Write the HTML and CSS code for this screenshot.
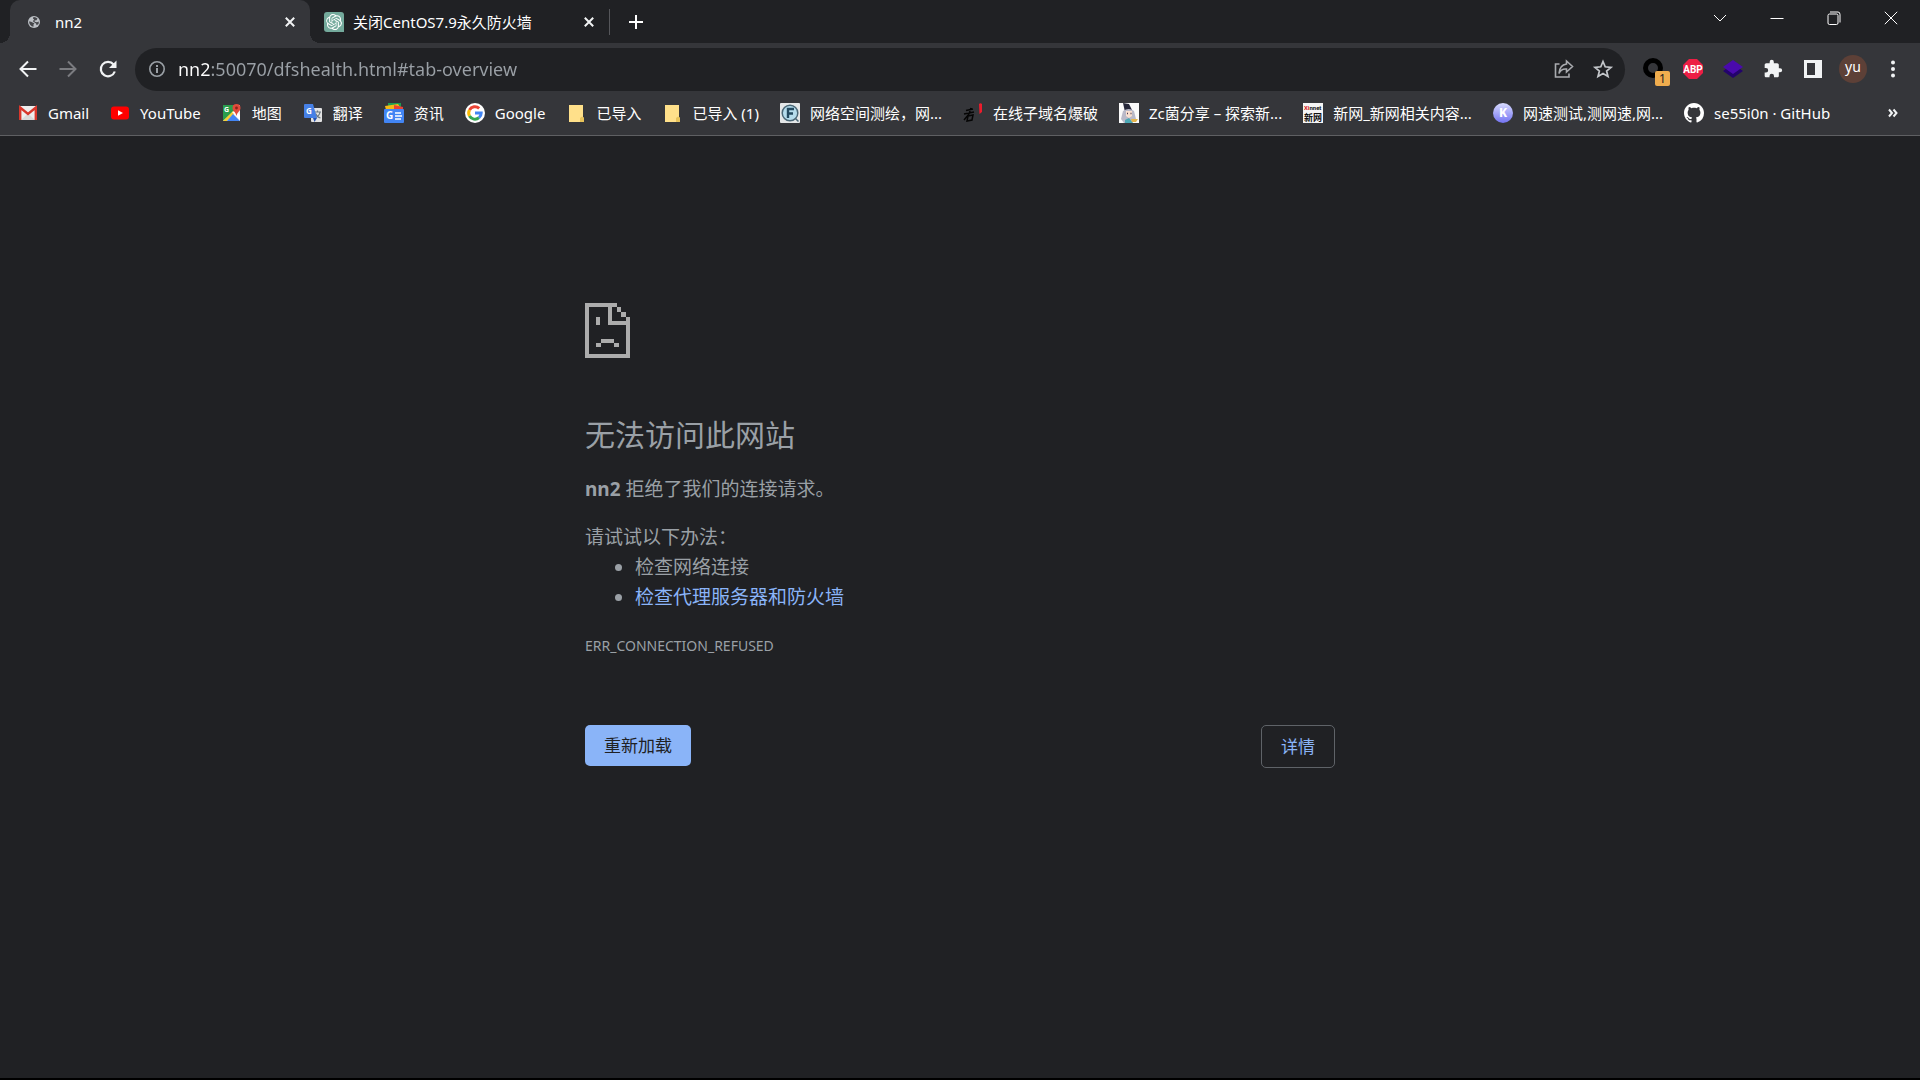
FILE: index.html
```html
<!DOCTYPE html>
<html lang="zh-CN">
<head>
<meta charset="utf-8">
<meta name="viewport" content="width=device-width, initial-scale=1">
<title>nn2</title>
<link rel="stylesheet" href="styles.css">
</head>
<body>
<header class="chrome">
  <div class="tabstrip">
    <div class="tabs">
      <div class="tab tab-active">
        <svg class="tab-globe" viewBox="0 0 12 12" aria-hidden="true"><circle cx="6" cy="6" r="6" fill="#bdc1c6"/><path d="M1 5.500Q2.500 5 4.500 6.500L6.500 7.200 5.500 8.500 5.500 10.800Q1.500 10 1 5.500ZM5.500 1Q8 .8 9.500 2.600L8.500 4.200 6.500 4.500 6.800 5.800 9 6.300 10.800 5.500 10.600 8 8.600 9.200 8 7.500 6.500 6.600 4.800 5.200 6.200 3.400 4.900 2.600Z" fill="#45464a"/></svg>
        <span class="tab-title">nn2</span>
        <button class="tab-close" aria-label="关闭标签页"><svg viewBox="0 0 10 10" aria-hidden="true"><path d="M.8.8 9.200 9.200M9.200.8.8 9.200"/></svg></button>
      </div>
      <div class="tab tab-second">
        <svg class="tab-icon" viewBox="0 0 20 20" aria-hidden="true"><path d="M3 0H17Q20 0 20 3V20H3Q0 20 0 17V3Q0 0 3 0Z" fill="#74aa9c"/><path transform="translate(2 2) scale(.667)" fill="#fff" d="M22.2819 9.8211a5.9847 5.9847 0 0 0-.5157-4.9108 6.0462 6.0462 0 0 0-6.5098-2.9A6.0651 6.0651 0 0 0 4.9807 4.1818a5.9847 5.9847 0 0 0-3.9977 2.9 6.0462 6.0462 0 0 0 .7427 7.0966 5.98 5.98 0 0 0 .511 4.9107 6.051 6.051 0 0 0 6.5146 2.9001A5.9847 5.9847 0 0 0 13.2599 24a6.0557 6.0557 0 0 0 5.7718-4.2058 5.9894 5.9894 0 0 0 3.9977-2.9001 6.0557 6.0557 0 0 0-.7475-7.0729zm-9.022 12.6081a4.4755 4.4755 0 0 1-2.8764-1.0408l.1419-.0804 4.7783-2.7582a.7948.7948 0 0 0 .3927-.6813v-6.7369l2.02 1.1686a.071.071 0 0 1 .038.052v5.5826a4.504 4.504 0 0 1-4.4945 4.4944zm-9.6607-4.1254a4.4708 4.4708 0 0 1-.5346-3.0137l.142.0852 4.783 2.7582a.7712.7712 0 0 0 .7806 0l5.8428-3.3685v2.3324a.0804.0804 0 0 1-.0332.0615L9.74 19.9502a4.4992 4.4992 0 0 1-6.1408-1.6464zM2.3408 7.8956a4.485 4.485 0 0 1 2.3655-1.9728V11.6a.7664.7664 0 0 0 .3879.6765l5.8144 3.3543-2.0201 1.1685a.0757.0757 0 0 1-.071 0l-4.8303-2.7865A4.504 4.504 0 0 1 2.3408 7.872zm16.5963 3.8558L13.1038 8.364 15.1192 7.2a.0757.0757 0 0 1 .071 0l4.8303 2.7913a4.4944 4.4944 0 0 1-.6765 8.1042v-5.6772a.79.79 0 0 0-.407-.667zm2.0107-3.0231l-.142-.0852-4.7735-2.7818a.7759.7759 0 0 0-.7854 0L9.409 9.2297V6.8974a.0662.0662 0 0 1 .0284-.0615l4.8303-2.7866a4.4992 4.4992 0 0 1 6.6802 4.66zM8.3065 12.863l-2.02-1.1638a.0804.0804 0 0 1-.038-.0567V6.0742a4.4992 4.4992 0 0 1 7.3757-3.4537l-.142.0805L8.704 5.459a.7948.7948 0 0 0-.3927.6813zm1.0976-2.3654l2.602-1.4998 2.6069 1.4998v2.9994l-2.5974 1.4997-2.6067-1.4997Z"/></svg>
        <span class="tab-title">关闭CentOS7.9永久防火墙</span>
        <button class="tab-close" aria-label="关闭标签页"><svg viewBox="0 0 10 10" aria-hidden="true"><path d="M.8.8 9.200 9.200M9.200.8.8 9.200"/></svg></button>
      </div>
      <button class="new-tab" aria-label="新标签页"><svg viewBox="0 0 16 16" aria-hidden="true"><path d="M8 1V15M1 8H15"/></svg></button>
    </div>
    <div class="window-controls">
      <button aria-label="搜索标签页"><svg viewBox="0 0 14 14" aria-hidden="true"><path d="M1 4 7 10 13 4"/></svg></button>
      <button aria-label="最小化"><svg viewBox="0 0 14 14" aria-hidden="true"><path d="M.5 7.500H13.500"/></svg></button>
      <button aria-label="还原"><svg viewBox="0 0 14 14" aria-hidden="true"><rect x="1" y="3" width="10" height="10.500" rx="1.500"/><path d="M3 1H11Q13 1 13 3.500V11.500"/></svg></button>
      <button aria-label="关闭"><svg viewBox="0 0 14 14" aria-hidden="true"><path d="M.8.8 13.200 13.200M13.200.8.8 13.200"/></svg></button>
    </div>
  </div>

  <div class="toolbar">
    <div class="nav">
      <button aria-label="后退"><svg viewBox="0 0 20 20" fill="none" stroke="#f1f3f4" stroke-width="2" aria-hidden="true"><path d="M18.500 10H3M10 2.500 2.500 10 10 17.500"/></svg></button>
      <button aria-label="前进" disabled><svg viewBox="0 0 20 20" fill="none" stroke="#7b7c80" stroke-width="2" aria-hidden="true"><path d="M1.500 10H17M10 2.500 17.500 10 10 17.500"/></svg></button>
      <button aria-label="重新加载此页"><svg viewBox="0 0 20 20" fill="none" stroke="#f1f3f4" stroke-width="2.200" aria-hidden="true"><path d="M16.800 12.500A7.200 7.200 0 1 1 15.600 5.500L17 7"/><path d="M18.500 1.500V9H11Z" fill="#f1f3f4" stroke="none"/></svg></button>
    </div>
    <div class="omnibox">
      <button aria-label="查看网站信息"><svg viewBox="0 0 20 20" aria-hidden="true"><circle cx="10" cy="10" r="7.200" fill="none" stroke="#9aa0a6" stroke-width="1.600"/><path d="M9 9H11V14H9ZM9 6H11V8H9Z" fill="#9aa0a6"/></svg></button>
      <input class="url" type="text" aria-label="地址和搜索栏" value="nn2:50070/dfshealth.html#tab-overview" spellcheck="false">
      <button class="page-action" aria-label="分享此页"><svg viewBox="0 0 20 20" fill="none" stroke="#a9abaf" stroke-width="1.600" aria-hidden="true"><path d="M5.500 5H1.500V18H15V14.500M12.500 2 18.500 7.500 12.500 13V10Q7 9.500 5 14.500 5.500 6 12.500 5Z"/></svg></button>
      <button class="page-action" aria-label="为此标签页添加书签"><svg viewBox="0 0 20 20" fill="none" stroke="#c4c7cb" stroke-width="1.700" aria-hidden="true"><path d="M10 2.500 12.200 7.800 18 8.300 13.600 12 15 17.500 10 14.500 5 17.500 6.400 12 2 8.300 7.800 7.800Z"/></svg></button>
    </div>
    <div class="extensions">
      <button class="ext-counter" aria-label="扩展程序"><svg viewBox="0 0 20 20" aria-hidden="true"><circle cx="10" cy="9" r="7.500" fill="none" stroke="#000" stroke-width="5"/></svg><span class="counter">1</span></button>
      <button aria-label="Adblock Plus"><svg viewBox="0 0 20 20" aria-hidden="true"><path d="M6 0H14L20 6V14L14 20H6L0 14V6Z" fill="#ed1e45"/><text class="abp" x="10" y="14" text-anchor="middle">ABP</text></svg></button>
      <button aria-label="图层扩展"><svg viewBox="0 0 20 20" aria-hidden="true"><path d="M0 12 10 5 20 12 10 19Z" fill="#23036b"/><path d="M0 8 10 1 20 8 10 15Z" fill="#4a0aad"/></svg></button>
      <button aria-label="管理扩展程序"><svg viewBox="0 0 24 24" aria-hidden="true"><path fill="#f1f3f4" d="M20.500 11H19V7c0-1.100-.9-2-2-2h-4V3.500a2.500 2.500 0 0 0-5 0V5H4c-1.100 0-1.990.9-1.990 2v3.800H3.500a2.700 2.700 0 0 1 0 5.400H2V20c0 1.100.9 2 2 2h3.800v-1.500a2.700 2.700 0 0 1 5.400 0V22H17c1.100 0 2-.9 2-2v-4h1.500a2.500 2.500 0 0 0 0-5z"/></svg></button>
      <button aria-label="侧边栏"><svg viewBox="0 0 20 20" aria-hidden="true"><path fill="#f1f3f4" fill-rule="evenodd" d="M1 1H19V19H1ZM4 4V16H12V4Z"/></svg></button>
      <button class="avatar" aria-label="个人资料">yu</button>
      <button aria-label="自定义及控制"><svg viewBox="0 0 20 20" fill="#f1f3f4" aria-hidden="true"><circle cx="10" cy="3.500" r="2"/><circle cx="10" cy="10" r="2"/><circle cx="10" cy="16.500" r="2"/></svg></button>
    </div>
  </div>

  <nav class="bookmarks" aria-label="书签栏">
    <a href="#gmail"><svg viewBox="0 0 20 20" aria-hidden="true"><rect x="1" y="3" width="18" height="14" rx="1" fill="#eee"/><path d="M3 17 10 10.500 17 17Z" fill="#d9d9d9"/><path d="M2.200 17V4.500L10 11 17.800 4.500V17" fill="none" stroke="#d8372c" stroke-width="2.400"/></svg>Gmail</a>
    <a href="#youtube"><svg viewBox="0 0 20 20" aria-hidden="true"><rect x="1" y="3.500" width="18" height="13" rx="3" fill="#f00"/><path d="M8 7.200 13 10 8 12.800Z" fill="#fff"/></svg>YouTube</a>
    <a href="#maps"><svg viewBox="0 0 20 20" aria-hidden="true"><path d="M1 2H18V18H1Z" fill="#eee"/><path d="M1 2H15L12 8 1 18Z" fill="#2a9d4c"/><path d="M1 18 11 8 13 10 5 18Z" fill="#f7cf35"/><path d="M5 18 11 11 18 18Z" fill="#4285f4"/><path d="M10 9 18 17V12L14 8Z" fill="#fff"/><path d="M14.500 1A4 4 0 0 1 18.500 5C18.500 8 15.500 8.500 14.500 13 13.500 8.500 10.500 8 10.500 5A4 4 0 0 1 14.500 1Z" fill="#e14b3b"/><circle cx="14.500" cy="5" r="1.400" fill="#8c2218"/><text x="2" y="9" font-size="7" font-weight="700" fill="#fff">G</text></svg>地图</a>
    <a href="#translate"><svg viewBox="0 0 20 20" aria-hidden="true"><rect x="8" y="5" width="11" height="14" rx="1" fill="#e3e3e3"/><path d="M11 9H18M14.500 7.500V9M12 15Q16.500 13 17 9M12.500 10.500Q14 14 17.500 15" fill="none" stroke="#6b7780" stroke-width="1.200"/><path d="M2 1H10L14 15H2Q1 15 1 14V2Q1 1 2 1Z" fill="#4680e6"/><path d="M10 15H14L11.500 19Z" fill="#2653b0"/><text x="3" y="11" font-size="8" font-weight="700" fill="#fff">G</text></svg>翻译</a>
    <a href="#news"><svg viewBox="0 0 20 20" aria-hidden="true"><path d="M4 0H17V7H4Z" fill="#1e9d52"/><path d="M1 3 14 1 18 7H2Z" fill="#f5ba15"/><path d="M10 2 19 4V8H10Z" fill="#ea4335"/><rect y="6" width="20" height="14" rx="1" fill="#4285f4"/><text x="2" y="16" font-size="10" font-weight="700" fill="#fff">G</text><path d="M11 10H17M11 13H18M11 16H17" stroke="#fff" stroke-width="1.500"/></svg>资讯</a>
    <a href="#google"><svg viewBox="0 0 20 20" aria-hidden="true"><circle cx="10" cy="10" r="10" fill="#fff"/><g fill="none" stroke-width="3"><path d="M14.200 5.400A6.200 6.200 0 0 0 4.500 7" stroke="#ea4335"/><path d="M4.500 7A6.200 6.200 0 0 0 4.500 13" stroke="#fbbc05"/><path d="M4.500 13A6.200 6.200 0 0 0 14 14.700" stroke="#34a853"/><path d="M14 14.700A6.200 6.200 0 0 0 16.200 10H10" stroke="#4285f4"/></g></svg>Google</a>
    <a href="#imported"><svg viewBox="0 0 20 20" aria-hidden="true"><path d="M3 2H17V14L18 15V19H3Z" fill="#ffe08a"/><path d="M14 19V15L16 13.500 18 15V19Z" fill="#e8c35a"/></svg>已导入</a>
    <a href="#imported-1"><svg viewBox="0 0 20 20" aria-hidden="true"><path d="M3 2H17V14L18 15V19H3Z" fill="#ffe08a"/><path d="M14 19V15L16 13.500 18 15V19Z" fill="#e8c35a"/></svg>已导入 (1)</a>
    <a href="#fofa"><svg viewBox="0 0 20 20" aria-hidden="true"><rect width="20" height="20" rx="1" fill="#e4e7e8"/><circle cx="10" cy="10" r="7.800" fill="#b5dcec" stroke="#496675" stroke-width="1.500"/><path d="M15.500 15.500 18.500 18.500" stroke="#496675" stroke-width="1.500"/><path d="M8 15V6H14M8 10.500H13" fill="none" stroke="#23495f" stroke-width="2.400"/></svg>网络空间测绘，网...</a>
    <a href="#subdomain"><svg viewBox="0 0 20 20" aria-hidden="true"><path d="M3 7.500 10 6M1 11 11 9M8 5 6 11 1 17M5 13 10 12 9 17 4 18Z" fill="none" stroke="#050505" stroke-width="1.500"/><path d="M16 1Q17.500-.5 19 1V9L16.500 11Z" fill="#ed1c2c"/></svg>在线子域名爆破</a>
    <a href="#zc"><svg viewBox="0 0 20 20" aria-hidden="true"><path d="M0 0H20V20H0Z" fill="#fafafa"/><path d="M4 0 10 1 13 7 6 9Z" fill="#252638"/><path d="M4 8Q10 4 15 8L17 16 13 20H5L2 16Z" fill="#b9b9c8"/><path d="M7 8H13V13L10 15 7 13Z" fill="#f9dfcf"/><path d="M8 10.500H9M11.500 10.500H12.500" stroke="#4a3c52" stroke-width="1.500"/><path d="M6 17 10 15 14 20H6Z" fill="#4ba8b5"/><path d="M12 16H19L17 19H13Z" fill="#e5b54c"/></svg>Zc菌分享 – 探索新...</a>
    <a href="#xinnet"><svg viewBox="0 0 20 20" aria-hidden="true"><path d="M0 0H20V20H0Z" fill="#f5f5f5"/><text class="xinnet" x="1" y="7"><tspan fill="#d51414">Xi</tspan>nnet</text><text class="xinnet-cn" x="1" y="18">新网</text></svg>新网_新网相关内容...</a>
    <a href="#speedtest"><svg viewBox="0 0 20 20" aria-hidden="true"><defs><linearGradient id="ball" x2="0" y2="1"><stop stop-color="#d9dcff"/><stop offset="1" stop-color="#7373f2"/></linearGradient></defs><circle cx="10" cy="10" r="10" fill="url(#ball)"/><text x="10" y="14" text-anchor="middle" font-size="12" font-weight="800" fill="#fff">K</text></svg>网速测试,测网速,网...</a>
    <a href="#github"><svg viewBox="0 0 16 16" aria-hidden="true"><path fill="#fff" d="M8 0C3.580 0 0 3.580 0 8c0 3.540 2.290 6.530 5.470 7.590.4.070.55-.17.55-.38 0-.19-.01-.82-.01-1.490-2.010.37-2.530-.49-2.690-.94-.09-.23-.48-.94-.82-1.130-.28-.15-.68-.52-.01-.53.63-.01 1.080.58 1.230.82.72 1.210 1.870.87 2.330.66.07-.52.28-.87.51-1.070-1.780-.2-3.640-.89-3.640-3.950 0-.87.31-1.590.82-2.150-.08-.2-.36-1.020.08-2.120 0 0 .67-.21 2.200.82.64-.18 1.320-.27 2-.27s1.360.09 2 .27c1.530-1.040 2.200-.82 2.200-.82.44 1.100.16 1.920.08 2.120.51.56.82 1.270.82 2.150 0 3.070-1.870 3.750-3.650 3.950.29.25.54.73.54 1.480 0 1.070-.01 1.930-.01 2.200 0 .21.15.46.55.38A8.010 8.010 0 0 0 16 8c0-4.420-3.580-8-8-8Z"/></svg>se55i0n · GitHub</a>
    <button class="more" aria-label="更多书签"><svg viewBox="0 0 10 10" aria-hidden="true"><path d="M1 1.500 4 5 1 8.500M5.500 1.500 8.500 5 5.500 8.500"/></svg></button>
  </nav>
</header>

<main class="error-page">
  <section class="error">
    <svg class="sad-page" viewBox="0 0 45 55" shape-rendering="crispEdges" fill="#acacac" aria-hidden="true"><path d="M0 0H32V4H27V18H45V55H0ZM4 4V51H41V22H23V4Z" fill-rule="evenodd"/><path d="M32 4H36V9H32ZM36 9H41V14H36ZM41 14H45V18H41ZM11 14H15V22H11ZM16 36H29V40H16ZM11 40H16V44H11ZM29 40H34V44H29Z"/></svg>
    <h1>无法访问此网站</h1>
    <p><strong>nn2</strong> 拒绝了我们的连接请求。</p>
    <div class="suggestions">
      <p>请试试以下办法：</p>
      <ul>
        <li>检查网络连接</li>
        <li><a href="#buttons">检查代理服务器和防火墙</a></li>
      </ul>
    </div>
    <div class="error-code">ERR_CONNECTION_REFUSED</div>
    <div class="actions" id="buttons">
      <button class="reload">重新加载</button>
      <button class="details">详情</button>
    </div>
  </section>
</main>
</body>
</html>
```

FILE: styles.css
```css
* {
  box-sizing: border-box;
}

body {
  margin: 0;
  min-height: 100vh;
  display: flex;
  flex-direction: column;
  background: #202124;
  border-bottom: 2px solid #000;
  font-family: "Noto Sans", "Noto Sans CJK SC", sans-serif;
  font-size: 15px;
  color: #fff;
}

button {
  padding: 0;
  border: 0;
  background: none;
  color: inherit;
  font: inherit;
  display: flex;
  align-items: center;
  justify-content: center;
}

svg {
  display: block;
  flex: none;
  overflow: visible;
}

.chrome {
  background: #35363a;
  border-bottom: 1px solid #5f6063;
}

/* Tab strip */
.tabstrip {
  display: flex;
  justify-content: space-between;
  height: 43px;
  padding: 0 1px 0 10px;
  background: #202124;
}

.tabs {
  display: flex;
  align-items: center;
}

.tab {
  display: flex;
  align-items: center;
  height: 43px;
  width: 300px;
  padding: 0 15px 0 14px;
}

.tab-active {
  position: relative;
  padding-left: 18px;
  background: #35363a;
  border-radius: 10px 10px 0 0;
}

.tab-active::before,
.tab-active::after {
  content: "";
  position: absolute;
  bottom: 0;
  width: 10px;
  height: 10px;
}

.tab-active::before {
  left: -10px;
  background: radial-gradient(circle at 0 0, transparent 10px, #35363a 10px);
}

.tab-active::after {
  right: -10px;
  background: radial-gradient(circle at 100% 0, transparent 10px, #35363a 10px);
}

.tab-second {
  height: 26px;
  border-right: 1px solid #55565a;
}

.tab-globe {
  width: 12px;
  height: 12px;
  margin-right: 15px;
}

.tab-icon {
  width: 20px;
  height: 20px;
  margin-right: 9px;
}

.tab-title {
  flex: 1;
  line-height: 24px;
  white-space: nowrap;
}

.tab-close svg {
  width: 10px;
  height: 10px;
  fill: none;
  stroke: #f1f3f4;
  stroke-width: 2;
}

.new-tab {
  width: 52px;
  height: 28px;
}

.new-tab svg {
  width: 16px;
  height: 16px;
  stroke: #fff;
  stroke-width: 2;
}

.window-controls {
  display: flex;
}

.window-controls button {
  width: 57px;
  height: 36px;
}

.window-controls svg {
  width: 14px;
  height: 14px;
  fill: none;
  stroke: #fff;
  stroke-width: 1;
}

/* Toolbar */
.toolbar {
  display: flex;
  align-items: center;
  height: 52px;
  padding: 0 7px 0 8px;
}

.nav,
.extensions {
  display: flex;
  align-items: center;
}

.nav {
  margin-right: 7px;
}

.nav button,
.extensions button {
  width: 40px;
  height: 40px;
}

.toolbar svg {
  width: 20px;
  height: 20px;
}

.omnibox {
  flex: 1;
  display: flex;
  align-items: center;
  height: 43px;
  padding: 0 3px 0 12px;
  border-radius: 22px;
  background: #202124;
}

/* The host part of the address is brighter than the rest of it. */
.url {
  flex: 1;
  min-width: 0;
  height: 30px;
  margin-left: 11px;
  padding: 0;
  border: 0;
  outline: 0;
  font: inherit;
  font-size: 18px;
  color: transparent;
  caret-color: #fff;
  background: linear-gradient(to right, #fff 32px, #9aa0a6 32px);
  background-clip: text;
  -webkit-background-clip: text;
}

.page-action {
  width: 39px;
  height: 40px;
}

.extensions {
  margin-left: 8px;
}

.abp {
  fill: #fff;
  font-family: Roboto, sans-serif;
  font-size: 10px;
  font-weight: 700;
}

.ext-counter {
  position: relative;
}

.counter {
  position: absolute;
  left: 22px;
  top: 22px;
  width: 15px;
  height: 15px;
  border-radius: 2px;
  background: #f0ad4e;
  color: #202124;
  font-size: 12px;
  line-height: 15px;
  text-align: center;
}

.extensions .avatar {
  width: 28px;
  height: 28px;
  margin: 0 6px;
  border-radius: 50%;
  background: #5d4037;
  font-size: 14px;
  line-height: 24px;
  align-items: flex-start;
}

/* Bookmarks bar */
.bookmarks {
  display: flex;
  align-items: center;
  gap: 21px;
  height: 40px;
  padding: 0 22px 4px 18px;
  overflow: hidden;
}

.bookmarks a {
  display: flex;
  align-items: center;
  gap: 10px;
  color: #fff;
  line-height: 24px;
  white-space: nowrap;
  text-decoration: none;
}

.bookmarks a svg {
  width: 20px;
  height: 20px;
}

.xinnet {
  fill: #111;
  font-family: Roboto, sans-serif;
  font-size: 6px;
  font-weight: 700;
}

.xinnet-cn {
  fill: #111;
  font-size: 9px;
  font-weight: 700;
}

.more {
  margin-left: auto;
}

.more svg {
  width: 10px;
  height: 10px;
  fill: none;
  stroke: #f1f3f4;
  stroke-width: 2;
}

/* Error page */
.error-page {
  flex: 1;
  padding: 167px 24px 40px;
  color: #9aa0a6;
  font-size: 19px;
  line-height: 30px;
}

.error {
  max-width: 750px;
  margin: 0 auto;
}

.sad-page {
  width: 45px;
  height: 55px;
}

.error h1 {
  margin: 58px 0 20px;
  font-size: 30px;
  font-weight: 400;
  line-height: 38px;
}

.error p {
  margin: 0;
}

.suggestions {
  margin-top: 18px;
}

.error ul {
  margin: 0;
  padding-left: 50px;
}

.error a {
  color: #8ab4f8;
  text-decoration: none;
}

.error-code {
  margin-top: 24px;
  font-size: 14px;
  line-height: 20px;
}

.actions {
  display: flex;
  justify-content: space-between;
  align-items: flex-start;
  margin-top: 69px;
}

.actions button {
  padding: 0 19px;
  border-radius: 5px;
  font-size: 17px;
  line-height: 41px;
}

.actions .reload {
  background: #8ab4f8;
  color: #202124;
}

.actions .details {
  border: 1px solid #5f6368;
  color: #8ab4f8;
}
```
